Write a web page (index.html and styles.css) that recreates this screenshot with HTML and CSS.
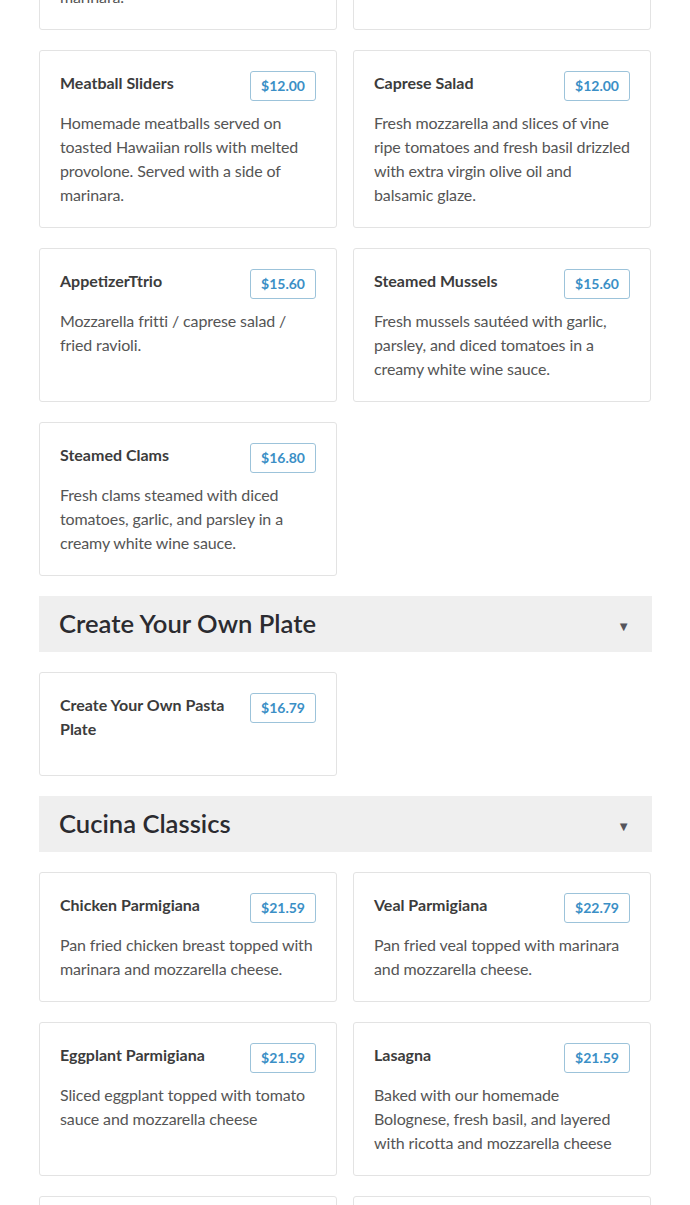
FILE: index.html
```html
<!DOCTYPE html>
<html lang="en">
<head>
<meta charset="utf-8">
<title>Menu</title>
<link rel="stylesheet" href="styles.css">
</head>
<body>
<main class="menu">
  <div class="grid">
    <article class="card">
      <div class="card-head"><h3 class="card-title">Chicken Parm Sliders</h3><span class="price">$12.00</span></div>
      <p class="card-desc">Homemade chicken cutlets served on toasted Hawaiian rolls with melted provolone. Served with a side of marinara.</p>
    </article>
    <article class="card">
      <div class="card-head"><h3 class="card-title">Fried Calamari</h3><span class="price">$14.00</span></div>
      <p class="card-desc">Lightly breaded calamari rings fried golden and served with lemon.</p>
    </article>

    <article class="card">
      <div class="card-head"><h3 class="card-title">Meatball Sliders</h3><span class="price">$12.00</span></div>
      <p class="card-desc">Homemade meatballs served on toasted Hawaiian rolls with melted provolone. Served with a side of marinara.</p>
    </article>
    <article class="card">
      <div class="card-head"><h3 class="card-title">Caprese Salad</h3><span class="price">$12.00</span></div>
      <p class="card-desc">Fresh mozzarella and slices of vine ripe tomatoes and fresh basil drizzled with extra virgin olive oil and balsamic glaze.</p>
    </article>

    <article class="card">
      <div class="card-head"><h3 class="card-title">AppetizerTtrio</h3><span class="price">$15.60</span></div>
      <p class="card-desc">Mozzarella fritti / caprese salad / fried ravioli.</p>
    </article>
    <article class="card">
      <div class="card-head"><h3 class="card-title">Steamed Mussels</h3><span class="price">$15.60</span></div>
      <p class="card-desc">Fresh mussels sautéed with garlic, parsley, and diced tomatoes in a creamy white wine sauce.</p>
    </article>

    <article class="card">
      <div class="card-head"><h3 class="card-title">Steamed Clams</h3><span class="price">$16.80</span></div>
      <p class="card-desc">Fresh clams steamed with diced tomatoes, garlic, and parsley in a creamy white wine sauce.</p>
    </article>
  </div>

  <section class="section">
    <header class="section-head">
      <h2 class="section-title">Create Your Own Plate</h2>
      <span class="caret">▼</span>
    </header>
    <div class="grid">
      <article class="card card--nodesc">
        <div class="card-head"><h3 class="card-title">Create Your Own Pasta Plate</h3><span class="price">$16.79</span></div>
      </article>
    </div>
  </section>

  <section class="section">
    <header class="section-head">
      <h2 class="section-title">Cucina Classics</h2>
      <span class="caret">▼</span>
    </header>
    <div class="grid">
      <article class="card">
        <div class="card-head"><h3 class="card-title">Chicken Parmigiana</h3><span class="price">$21.59</span></div>
        <p class="card-desc">Pan fried chicken breast topped with marinara and mozzarella cheese.</p>
      </article>
      <article class="card">
        <div class="card-head"><h3 class="card-title">Veal Parmigiana</h3><span class="price">$22.79</span></div>
        <p class="card-desc">Pan fried veal topped with marinara and mozzarella cheese.</p>
      </article>
      <article class="card">
        <div class="card-head"><h3 class="card-title">Eggplant Parmigiana</h3><span class="price">$21.59</span></div>
        <p class="card-desc">Sliced eggplant topped with tomato sauce and mozzarella cheese</p>
      </article>
      <article class="card">
        <div class="card-head"><h3 class="card-title">Lasagna</h3><span class="price">$21.59</span></div>
        <p class="card-desc">Baked with our homemade Bolognese, fresh basil, and layered with ricotta and mozzarella cheese</p>
      </article>
      <article class="card">
        <div class="card-head"><h3 class="card-title">Fettuccine Alfredo</h3><span class="price">$19.19</span></div>
        <p class="card-desc">Fettuccine tossed in a rich and creamy parmesan cream sauce.</p>
      </article>
      <article class="card">
        <div class="card-head"><h3 class="card-title">Baked Ziti</h3><span class="price">$19.19</span></div>
        <p class="card-desc">Ziti baked with marinara, ricotta and melted mozzarella cheese.</p>
      </article>
    </div>
  </section>
</main>
</body>
</html>
```

FILE: styles.css
```css
* { box-sizing: border-box; }

html, body {
  margin: 0;
  padding: 0;
  background: #ffffff;
  font-family: Lato, "Open Sans", "Liberation Sans", sans-serif;
  color: #555555;
}

.menu {
  width: 613px;
  margin: -148px 0 0 39px;
  display: flex;
  flex-direction: column;
  gap: 20px;
  padding-bottom: 40px;
}

.grid {
  display: grid;
  grid-template-columns: 298px 298px;
  column-gap: 16px;
  row-gap: 20px;
}

.section {
  display: flex;
  flex-direction: column;
  gap: 20px;
}

.section-head {
  height: 56px;
  background: #efefef;
  display: flex;
  align-items: center;
  justify-content: space-between;
  padding: 0 22px 0 20px;
}

.section-title {
  margin: 0;
  font-size: 25.6px;
  font-weight: 600;
  color: #2b2b30;
  line-height: 30px;
  padding-bottom: 2px;
}

.caret {
  font-size: 13px;
  color: #55555c;
  line-height: 1;
  padding-top: 4px;
}

.card {
  border: 1px solid #e3e3e3;
  border-radius: 3px;
  padding: 20px;
  background: #fff;
}

.card--nodesc {
  padding-bottom: 34px;
}

.card-head {
  display: flex;
  justify-content: space-between;
  align-items: flex-start;
  gap: 16px;
}

.card-title {
  margin: 0;
  font-size: 16px;
  line-height: 24px;
  font-weight: 700;
  color: #3c3c3c;
}

.price {
  flex: none;
  height: 30px;
  padding: 0 10px;
  border: 1px solid #9cc3da;
  border-radius: 3px;
  font-size: 14px;
  font-weight: 700;
  line-height: 28px;
  color: #3b8fc6;
}

.card-desc {
  margin: 10px -4px 0 0;
  font-size: 16px;
  line-height: 24px;
  letter-spacing: -0.12px;
  color: #555555;
}
```
